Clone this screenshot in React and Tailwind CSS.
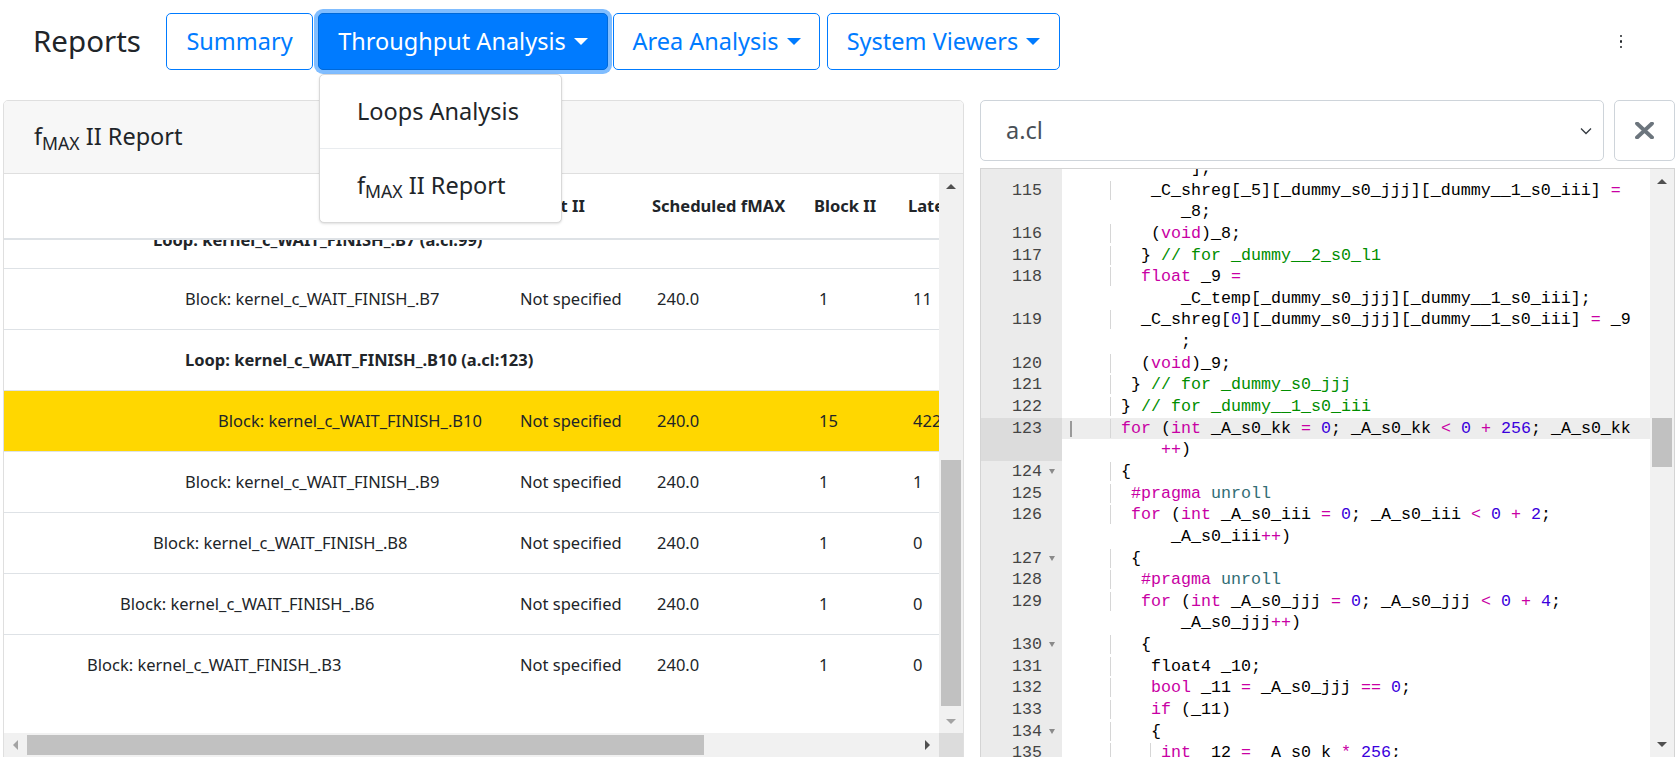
import React from 'react'

// token colours (ace xcode-like)
const tokenClass = {
  k: 'text-[#c800a4]',
  n: 'text-[#3a00dc]',
  c: 'text-[#008e00]',
  m: 'text-[#326d74]',
}

const codeRows = [
  { indent: 12, t: [['];']] },
  { n: 115, indent: 8, t: [['_C_shreg[_5][_dummy_s0_jjj][_dummy__1_s0_iii] '], ['=', 'k']] },
  { indent: 11, t: [['_8;']] },
  { n: 116, indent: 8, t: [['('], ['void', 'k'], [')_8;']] },
  { n: 117, indent: 7, t: [['} '], ['// for _dummy__2_s0_l1', 'c']] },
  { n: 118, indent: 7, t: [['float', 'k'], [' _9 '], ['=', 'k']] },
  { indent: 11, t: [['_C_temp[_dummy_s0_jjj][_dummy__1_s0_iii];']] },
  { n: 119, indent: 7, t: [['_C_shreg['], ['0', 'n'], ['][_dummy_s0_jjj][_dummy__1_s0_iii] '], ['=', 'k'], [' _9']] },
  { indent: 11, t: [[';']] },
  { n: 120, indent: 7, t: [['('], ['void', 'k'], [')_9;']] },
  { n: 121, indent: 6, t: [['} '], ['// for _dummy_s0_jjj', 'c']] },
  { n: 122, indent: 5, t: [['} '], ['// for _dummy__1_s0_iii', 'c']] },
  {
    n: 123, indent: 5, active: true, gutterActive: true,
    t: [['for', 'k'], [' ('], ['int', 'k'], [' _A_s0_kk '], ['=', 'k'], [' '], ['0', 'n'], ['; _A_s0_kk '], ['<', 'k'], [' '], ['0', 'n'], [' '], ['+', 'k'], [' '], ['256', 'n'], ['; _A_s0_kk']],
  },
  { indent: 9, gutterActive: true, t: [['++', 'k'], [')']] },
  { n: 124, fold: true, indent: 5, t: [['{']] },
  { n: 125, indent: 6, t: [['#pragma', 'k'], [' '], ['unroll', 'm']] },
  {
    n: 126, indent: 6,
    t: [['for', 'k'], [' ('], ['int', 'k'], [' _A_s0_iii '], ['=', 'k'], [' '], ['0', 'n'], ['; _A_s0_iii '], ['<', 'k'], [' '], ['0', 'n'], [' '], ['+', 'k'], [' '], ['2', 'n'], [';']],
  },
  { indent: 10, t: [['_A_s0_iii'], ['++', 'k'], [')']] },
  { n: 127, fold: true, indent: 6, t: [['{']] },
  { n: 128, indent: 7, t: [['#pragma', 'k'], [' '], ['unroll', 'm']] },
  {
    n: 129, indent: 7,
    t: [['for', 'k'], [' ('], ['int', 'k'], [' _A_s0_jjj '], ['=', 'k'], [' '], ['0', 'n'], ['; _A_s0_jjj '], ['<', 'k'], [' '], ['0', 'n'], [' '], ['+', 'k'], [' '], ['4', 'n'], [';']],
  },
  { indent: 11, t: [['_A_s0_jjj'], ['++', 'k'], [')']] },
  { n: 130, fold: true, indent: 7, t: [['{']] },
  { n: 131, indent: 8, t: [['float4 _10;']] },
  { n: 132, indent: 8, t: [['bool', 'k'], [' _11 '], ['=', 'k'], [' _A_s0_jjj '], ['==', 'k'], [' '], ['0', 'n'], [';']] },
  { n: 133, indent: 8, t: [['if', 'k'], [' (_11)']] },
  { n: 134, fold: true, indent: 8, t: [['{']] },
  { n: 135, indent: 9, t: [['int', 'k'], [' _12 '], ['=', 'k'], [' _A_s0_k '], ['*', 'k'], [' '], ['256', 'n'], [';']] },
]

const tableRows = [
  { name: 'Block: kernel_c_WAIT_FINISH_.B7', lvl: 3, ii: 'Not specified', fmax: '240.0', block: '1', lat: '11' },
  { name: 'Loop: kernel_c_WAIT_FINISH_.B10 (a.cl:123)', lvl: 3, loop: true },
  { name: 'Block: kernel_c_WAIT_FINISH_.B10', lvl: 4, ii: 'Not specified', fmax: '240.0', block: '15', lat: '422', hl: true },
  { name: 'Block: kernel_c_WAIT_FINISH_.B9', lvl: 3, ii: 'Not specified', fmax: '240.0', block: '1', lat: '1' },
  { name: 'Block: kernel_c_WAIT_FINISH_.B8', lvl: 2, ii: 'Not specified', fmax: '240.0', block: '1', lat: '0' },
  { name: 'Block: kernel_c_WAIT_FINISH_.B6', lvl: 1, ii: 'Not specified', fmax: '240.0', block: '1', lat: '0' },
  { name: 'Block: kernel_c_WAIT_FINISH_.B3', lvl: 0, ii: 'Not specified', fmax: '240.0', block: '1', lat: '0' },
]

const indentClass = ['pl-[83px]', 'pl-[116px]', 'pl-[149px]', 'pl-[181px]', 'pl-[214px]']

function Caret({ white }) {
  return (
    <span
      className={
        white
          ? 'ml-[8px] inline-block h-0 w-0 border-x-[7px] border-t-[7px] border-x-transparent border-t-white'
          : 'ml-[8px] inline-block h-0 w-0 border-x-[7px] border-t-[7px] border-x-transparent border-t-[#007bff]'
      }
    />
  )
}

function FMax() {
  return (
    <span>
      f<sub>MAX</sub> II Report
    </span>
  )
}

// leading whitespace, with ace-style indent guides every 4 columns
function Indent({ n, guides }) {
  const parts = []
  let i = 0
  while (guides && n - i > 4) {
    parts.push(
      <span key={i} className="shadow-[inset_-1px_0_0_#d6d6d6]">
        {'    '}
      </span>
    )
    i += 4
  }
  parts.push(<span key="rest">{' '.repeat(n - i)}</span>)
  return parts
}

function ArrowUp({ light }) {
  return <span className={light ? 'h-0 w-0 border-x-[5px] border-b-[5px] border-x-transparent border-b-[#a3a3a3]' : 'h-0 w-0 border-x-[5px] border-b-[5px] border-x-transparent border-b-[#505050]'} />
}

function ArrowDown({ light }) {
  return <span className={light ? 'h-0 w-0 border-x-[5px] border-t-[5px] border-x-transparent border-t-[#a3a3a3]' : 'h-0 w-0 border-x-[5px] border-t-[5px] border-x-transparent border-t-[#505050]'} />
}

function TableRow({ row }) {
  if (row.loop) {
    return (
      <div className="flex h-[61px] items-center border-t border-[#dee2e6] font-bold whitespace-nowrap">
        <div className={indentClass[row.lvl]}>{row.name}</div>
      </div>
    )
  }
  return (
    <div className={row.hl ? 'flex h-[61px] items-center border-t border-[#dee2e6] bg-[#ffd700] whitespace-nowrap' : 'flex h-[61px] items-center border-t border-[#dee2e6] whitespace-nowrap'}>
      <div className={'w-[501px] shrink-0 ' + indentClass[row.lvl]}>{row.name}</div>
      <div className="w-[137px] shrink-0 pl-[15px]">{row.ii}</div>
      <div className="w-[162px] shrink-0 pl-[15px]">{row.fmax}</div>
      <div className="w-[94px] shrink-0 pl-[15px]">{row.block}</div>
      <div className="w-[130px] shrink-0 pl-[15px]">{row.lat}</div>
      <div className="w-[300px] shrink-0 pl-[15px]">1</div>
    </div>
  )
}

export default function App() {
  return (
    <div className="h-[757px] w-[1678px] overflow-hidden bg-white font-['Noto_Sans',sans-serif] text-[#212529]">
      {/* top nav */}
      <div className="flex h-[100px] items-start pt-[13px]">
        <div className="flex h-[57px] w-[166px] items-center pl-[33px] text-[29.5px]">Reports</div>
        <button className="flex h-[57px] w-[147px] items-center justify-center rounded-[5px] border border-[#007bff] text-[23.5px] text-[#007bff]">
          Summary
        </button>
        <div className="relative ml-[5px]">
          <button className="flex h-[57px] w-[290px] items-center justify-center rounded-[5px] border border-[#0069d9] bg-[#007bff] text-[23.5px] text-white ring-4 ring-[#80bdff]">
            Throughput Analysis
            <Caret white />
          </button>
          <div className="absolute left-[1px] top-[61px] z-10 w-[243px] rounded-[5px] border border-[#d9d9d9] bg-white text-[23.5px] shadow-sm">
            <div className="flex h-[73px] items-center pl-[37px]">Loops Analysis</div>
            <div className="flex h-[74px] items-center border-t border-[#e9ecef] pl-[37px]">
              <FMax />
            </div>
          </div>
        </div>
        <button className="ml-[5px] flex h-[57px] w-[207px] items-center justify-center rounded-[5px] border border-[#007bff] text-[23.5px] text-[#007bff]">
          Area Analysis
          <Caret />
        </button>
        <button className="ml-[7px] flex h-[57px] w-[233px] items-center justify-center rounded-[5px] border border-[#007bff] text-[23.5px] text-[#007bff]">
          System Viewers
          <Caret />
        </button>
        <div className="ml-auto mr-[56px] flex h-[57px] flex-col items-center justify-center gap-[3px]">
          <span className="h-[2.5px] w-[2.5px] rounded-full bg-[#212529]" />
          <span className="h-[2.5px] w-[2.5px] rounded-full bg-[#212529]" />
          <span className="h-[2.5px] w-[2.5px] rounded-full bg-[#212529]" />
        </div>
      </div>

      <div className="flex items-start">
        {/* left card */}
        <div className="ml-[3px] h-[700px] w-[961px] shrink-0 overflow-hidden rounded-[5px] border border-[#dfdfdf]">
          <div className="flex h-[73px] items-center border-b border-[#dfdfdf] bg-[#f7f7f7] px-[30px] text-[23.5px]">
            <FMax />
          </div>
          <div className="flex h-[559px]">
            <div className="flex-1 overflow-hidden text-[16.5px]">
              <div className="flex h-[66px] items-center border-b-2 border-[#dee2e6] font-bold whitespace-nowrap">
                <div className="w-[501px] shrink-0" />
                <div className="w-[137px] shrink-0 pl-[10px]">Target II</div>
                <div className="w-[162px] shrink-0 pl-[10px]">Scheduled fMAX</div>
                <div className="w-[94px] shrink-0 pl-[10px]">Block II</div>
                <div className="w-[130px] shrink-0 pl-[10px]">Latency</div>
                <div className="w-[300px] shrink-0 pl-[10px]">Max Interleaving Iterations</div>
              </div>
              <div className="h-[28px] overflow-hidden">
                <div className="-mt-[30px] flex h-[61px] items-center font-bold whitespace-nowrap">
                  <div className={indentClass[2]}>Loop: kernel_c_WAIT_FINISH_.B7 (a.cl:99)</div>
                </div>
              </div>
              {tableRows.map((row, i) => (
                <TableRow key={i} row={row} />
              ))}
            </div>
            {/* vertical scrollbar */}
            <div className="flex w-[24px] shrink-0 flex-col bg-[#f1f1f1]">
              <div className="flex h-[24px] items-center justify-center">
                <ArrowUp />
              </div>
              <div className="mx-[2px] mt-[262px] h-[246px] bg-[#c1c1c1]" />
              <div className="flex-1" />
              <div className="flex h-[24px] items-center justify-center">
                <ArrowDown light />
              </div>
            </div>
          </div>
          {/* horizontal scrollbar */}
          <div className="flex h-[24px]">
            <div className="flex flex-1 bg-[#f1f1f1]">
              <div className="flex w-[23px] items-center justify-center">
                <span className="h-0 w-0 border-y-[5px] border-r-[5px] border-y-transparent border-r-[#a3a3a3]" />
              </div>
              <div className="my-[2px] w-[677px] bg-[#c1c1c1]" />
              <div className="flex-1" />
              <div className="flex w-[24px] items-center justify-center">
                <span className="h-0 w-0 border-y-[5px] border-l-[5px] border-y-transparent border-l-[#505050]" />
              </div>
            </div>
            <div className="w-[24px] bg-[#dcdcdc]" />
          </div>
        </div>

        {/* right column */}
        <div className="ml-[16px] w-[695px] shrink-0">
          <div className="flex">
            <div className="flex h-[61px] w-[624px] items-center justify-between rounded-[5px] border border-[#ced4da] pl-[25px] pr-[11px] text-[23.5px] text-[#495057]">
              <span>a.cl</span>
              <svg width="12" height="8" viewBox="0 0 12 8">
                <path d="M1 1.5 L6 6.5 L11 1.5" fill="none" stroke="#343a40" strokeWidth="1.3" />
              </svg>
            </div>
            <button className="ml-[10px] flex h-[61px] w-[61px] items-center justify-center rounded-[5px] border border-[#ced4da]">
              <svg width="19" height="17" viewBox="0 0 19 17">
                <path d="M2 1.5 L17 15.5 M17 1.5 L2 15.5" stroke="#6c757d" strokeWidth="3.8" strokeLinecap="round" />
              </svg>
            </button>
          </div>

          {/* code editor */}
          <div className="mt-[7px] flex h-[600px] border border-[#d4d4d4] font-['Liberation_Mono',monospace] text-[16.67px]">
            <div className="flex-1 overflow-hidden">
              <div className="-mt-[11px]">
                {codeRows.map((r, i) => (
                  <div key={i} className="flex h-[21.65px] leading-[21.65px]">
                    <div className={r.gutterActive ? 'flex w-[81px] shrink-0 justify-end bg-[#dcdcdc] text-[#444]' : 'flex w-[81px] shrink-0 justify-end bg-[#ebebeb] text-[#444]'}>
                      <span>{r.n || ''}</span>
                      <span className="flex w-[20px] items-center justify-center">
                        {r.fold && <span className="h-0 w-0 border-x-[3.5px] border-t-[5px] border-x-transparent border-t-[#8a8a8a]" />}
                      </span>
                    </div>
                    <div className={r.active ? 'relative flex-1 whitespace-pre bg-[#ededed] pl-[9px] text-black' : 'relative flex-1 whitespace-pre pl-[9px] text-black'}>
                      {r.active && <span className="absolute left-[8px] top-[3px] h-[16px] w-[1.5px] bg-[#9a9a9a]" />}
                      <Indent n={r.indent} guides={!!r.n} />
                      {r.t.map(([txt, kind], j) => (
                        <span key={j} className={kind ? tokenClass[kind] : undefined}>
                          {txt}
                        </span>
                      ))}
                    </div>
                  </div>
                ))}
              </div>
            </div>
            <div className="flex w-[24px] shrink-0 flex-col bg-[#f1f1f1]">
              <div className="flex h-[24px] items-center justify-center">
                <ArrowUp />
              </div>
              <div className="mx-[2px] mt-[225px] h-[49px] bg-[#c1c1c1]" />
              <div className="h-[265px]" />
              <div className="flex h-[24px] items-center justify-center">
                <ArrowDown />
              </div>
            </div>
          </div>
        </div>
      </div>
    </div>
  )
}
